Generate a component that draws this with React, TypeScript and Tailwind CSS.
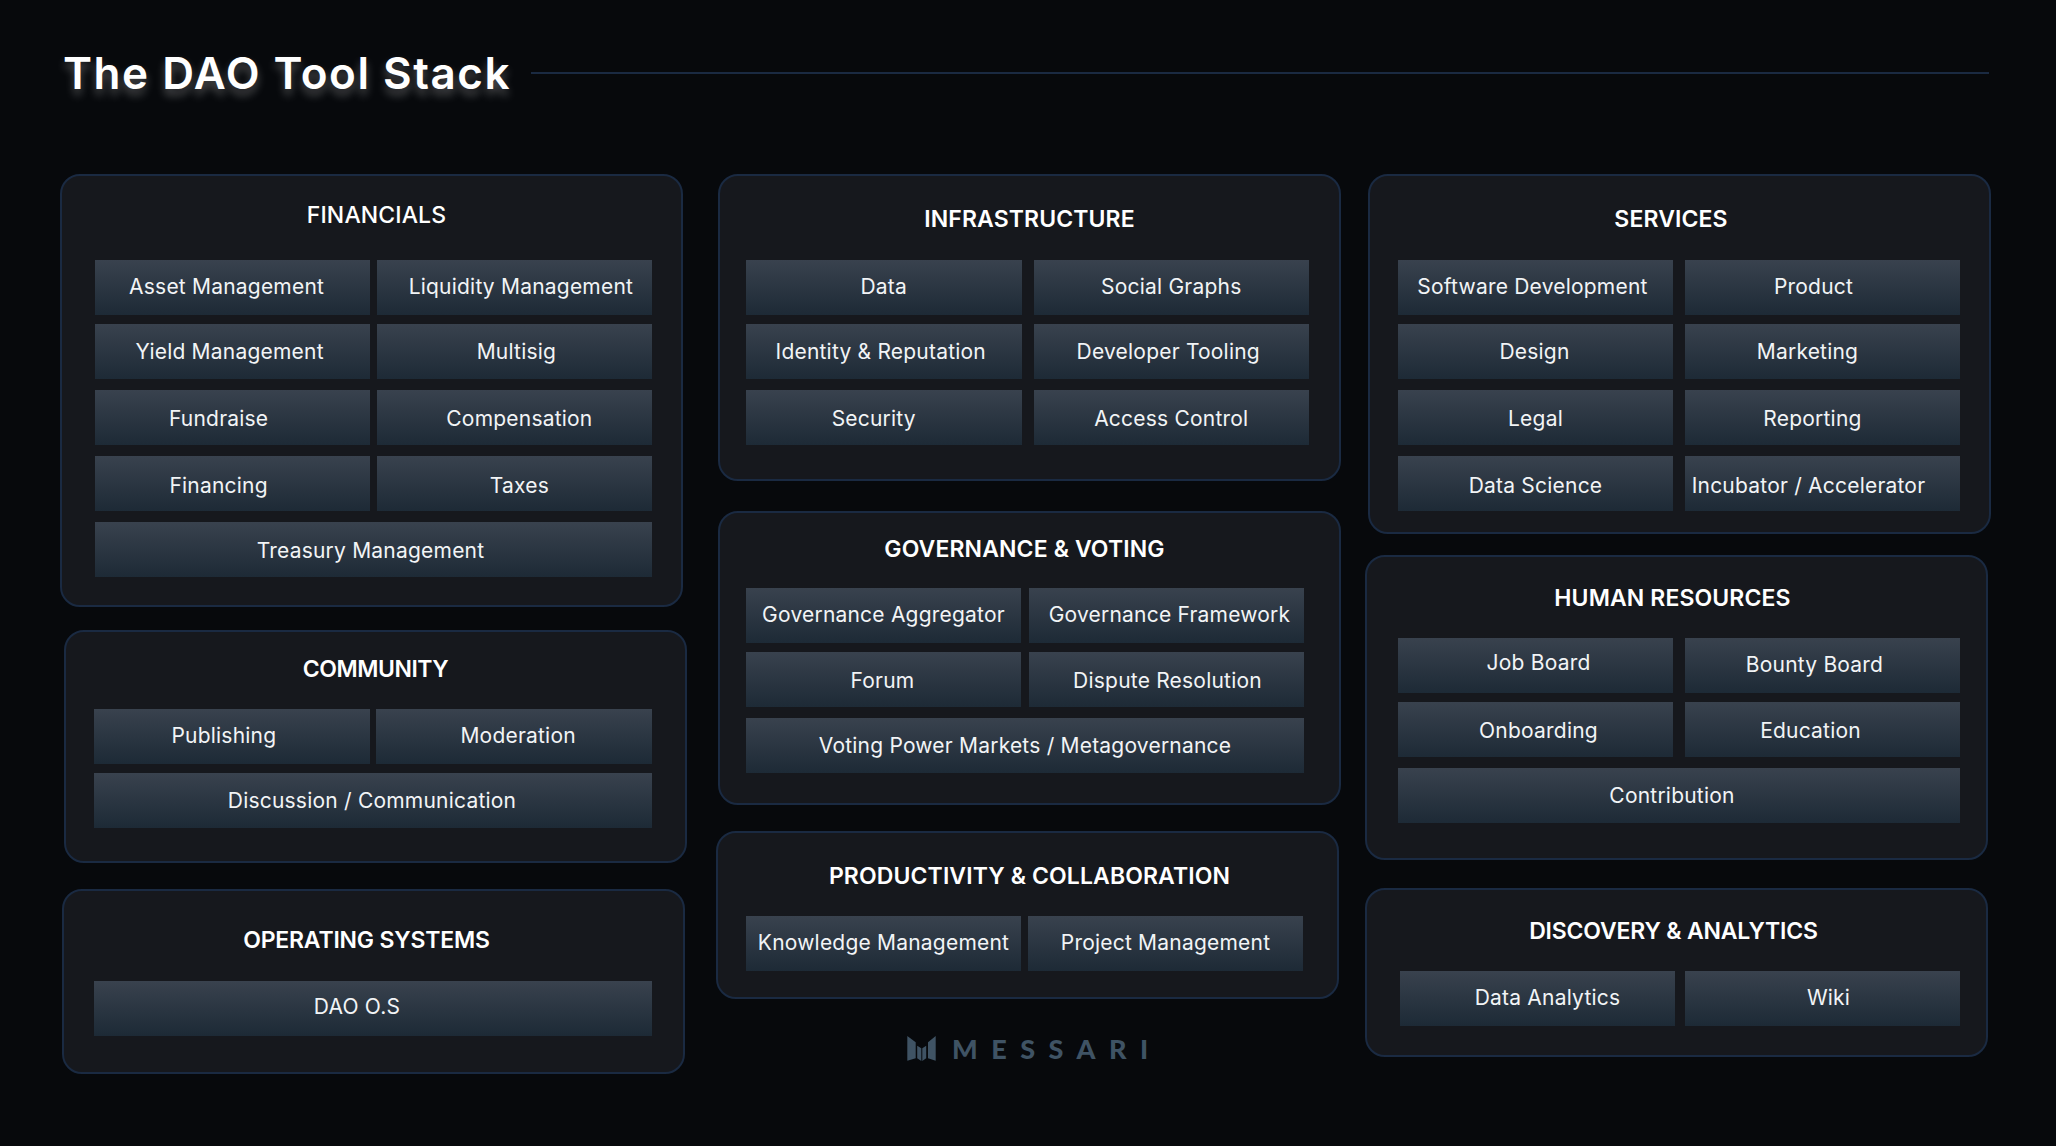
import type { ReactNode } from 'react';

type TileDef = { label: string; shift?: string };
type RowDef = { className?: string; tiles: TileDef[] };

type CardProps = {
  title: string;
  cardClass: string;
  headClass: string;
  titleClass?: string;
  bodyClass: string;
  rowClass: string;
  rows: RowDef[];
};

function Tile({ label, shift = '' }: TileDef) {
  return (
    <div className="flex-1 h-[55px] flex items-center justify-center bg-gradient-to-b from-[#39424e] to-[#1d2a36]">
      <span className={`text-[21px] tracking-[0.01em] text-[#f2f4f6] whitespace-nowrap ${shift}`}>{label}</span>
    </div>
  );
}

function Card({ title, cardClass, headClass, titleClass = 'font-semibold tracking-[0.005em]', bodyClass, rowClass, rows }: CardProps) {
  return (
    <section className={`w-[623px] rounded-[20px] border-2 border-[#1a2a42] bg-[#16181d] ${cardClass}`}>
      {/* Heading block, height sets where the tiles start */}
      <div className={`flex justify-center items-start ${headClass}`}>
        <h2 className={`text-[23px] leading-[28px] text-white ${titleClass}`}>{title}</h2>
      </div>
      <div className={bodyClass}>
        {rows.map((row, i) => (
          <div key={i} className={`flex ${rowClass} ${row.className ?? ''}`}>
            {row.tiles.map((t) => (
              <Tile key={t.label} {...t} />
            ))}
          </div>
        ))}
      </div>
    </section>
  );
}

function Column({ className, children }: { className: string; children: ReactNode }) {
  return <div className={`flex flex-col ${className}`}>{children}</div>;
}

function MessariMark() {
  return (
    <svg viewBox="0 0 29 27" className="w-[29px] h-[27px]" fill="#3f5364">
      <polygon points="0.3,1 8.7,7.3 8.7,23.3 0.3,25.7" />
      <polygon points="10.2,10.7 14.3,13.3 14.3,26 10.2,23.3" />
      <polygon points="15.3,13.3 19.2,10.7 19.2,23.3 15.3,26" />
      <polygon points="21,7.3 28.7,1 28.7,25.7 21,23.3" />
    </svg>
  );
}

export default function App() {
  return (
    <div className="w-[2056px] h-[1146px] overflow-hidden bg-[#07090c] font-['Inter','Liberation_Sans',sans-serif]">
      {/* Header */}
      <header className="flex items-center pl-[63px] pr-[67px] pt-[2px] h-[144px] mb-[30px]">
        <h1 className="text-[44px] leading-[52px] font-semibold text-white tracking-[0.035em] whitespace-nowrap [text-shadow:0_6px_10px_rgba(255,255,255,0.3)]">
          The DAO Tool Stack
        </h1>
        <div className="flex-1 h-[2px] bg-[#1a2a42] ml-[20px]" />
      </header>

      <main className="flex pl-[60px]">
        <Column className="w-[658px]">
          <Card
            title="FINANCIALS"
            cardClass="h-[433px]"
            headClass="h-[84px] pt-[25px]"
            titleClass="font-medium ml-[10px] tracking-[0.005em]"
            bodyClass="pl-[33px] w-[590px]"
            rowClass="gap-[6.5px]"
            rows={[
              { tiles: [{ label: 'Asset Management', shift: 'pr-[12px] pb-[2px]' }, { label: 'Liquidity Management', shift: 'pl-[13px] pb-[2px]' }] },
              { className: 'mt-[9px]', tiles: [{ label: 'Yield Management', shift: 'pr-[6px]' }, { label: 'Multisig', shift: 'pl-[4px]' }] },
              { className: 'mt-[11px]', tiles: [{ label: 'Fundraise', shift: 'pr-[28px] pt-[2px]' }, { label: 'Compensation', shift: 'pl-[10px] pt-[2px]' }] },
              { className: 'mt-[11px]', tiles: [{ label: 'Financing', shift: 'pr-[28px] pt-[4px]' }, { label: 'Taxes', shift: 'pl-[10px] pt-[4px]' }] },
              { className: 'mt-[11px]', tiles: [{ label: 'Treasury Management', shift: 'pr-[6px] pt-[2px]' }] },
            ]}
          />
          <Card
            title="COMMUNITY"
            cardClass="h-[233px] mt-[23px] ml-[4px]"
            headClass="h-[77px] pt-[23px]"
            titleClass="font-semibold tracking-[-0.02em]"
            bodyClass="pl-[28px] w-[586px]"
            rowClass="gap-[6.5px]"
            rows={[
              { tiles: [{ label: 'Publishing', shift: 'pr-[16px] pb-[2px]' }, { label: 'Moderation', shift: 'pl-[8px] pb-[2px]' }] },
              { className: 'mt-[9px]', tiles: [{ label: 'Discussion / Communication', shift: 'pr-[2px] pt-[1px]' }] },
            ]}
          />
          <Card
            title="OPERATING SYSTEMS"
            cardClass="h-[185px] mt-[26px] ml-[2px]"
            headClass="h-[90px] pt-[35px]"
            titleClass="font-semibold mr-[14px] tracking-[-0.008em]"
            bodyClass="pl-[30px] w-[588px]"
            rowClass=""
            rows={[{ tiles: [{ label: 'DAO O.S', shift: 'pr-[32px] pb-[4px]' }] }]}
          />
        </Column>

        <Column className="w-[650px]">
          <Card
            title="INFRASTRUCTURE"
            cardClass="h-[307px]"
            headClass="h-[84px] pt-[29px]"
            bodyClass="pl-[26px] w-[589px]"
            rowClass="gap-[12px]"
            rows={[
              { tiles: [{ label: 'Data', shift: 'pb-[2px]' }, { label: 'Social Graphs', shift: 'pb-[2px]' }] },
              { className: 'mt-[9px]', tiles: [{ label: 'Identity & Reputation', shift: 'pr-[6px] pt-[1px]' }, { label: 'Developer Tooling', shift: 'pr-[6px] pt-[1px]' }] },
              { className: 'mt-[11px]', tiles: [{ label: 'Security', shift: 'pr-[20px] pt-[2px]' }, { label: 'Access Control', shift: 'pt-[2px]' }] },
            ]}
          />
          <Card
            title="GOVERNANCE & VOTING"
            cardClass="h-[294px] mt-[30px]"
            headClass="h-[75px] pt-[22px]"
            titleClass="font-semibold mr-[10px] tracking-[0.005em]"
            bodyClass="pl-[26px] w-[584px]"
            rowClass="gap-[8px]"
            rows={[
              { tiles: [{ label: 'Governance Aggregator', shift: 'pb-[2px]' }, { label: 'Governance Framework', shift: 'pl-[6px] pb-[2px]' }] },
              { className: 'mt-[9px]', tiles: [{ label: 'Forum', shift: 'pr-[2px] pt-[2px]' }, { label: 'Dispute Resolution', shift: 'pl-[2px] pt-[2px]' }] },
              { className: 'mt-[11px]', tiles: [{ label: 'Voting Power Markets / Metagovernance' }] },
            ]}
          />
          <Card
            title="PRODUCTIVITY & COLLABORATION"
            cardClass="h-[168px] mt-[26px] ml-[-2px]"
            headClass="h-[83px] pt-[29px]"
            titleClass="font-semibold ml-[4px] tracking-[0.005em]"
            bodyClass="pl-[28px] w-[585px]"
            rowClass="gap-[7px]"
            rows={[{ tiles: [{ label: 'Knowledge Management', shift: 'pb-[2px]' }, { label: 'Project Management', shift: 'pb-[2px]' }] }]}
          />
          {/* Footer logo */}
          <div className="flex items-center ml-[189px] mt-[36px] gap-[16px]">
            <MessariMark />
            <span className="font-['Lato',sans-serif] font-black text-[27px] leading-[27px] tracking-[0.5em] text-[#3f5364] whitespace-nowrap">
              MESSARI
            </span>
          </div>
        </Column>

        <Column className="w-[630px]">
          <Card
            title="SERVICES"
            cardClass="h-[360px]"
            headClass="h-[84px] pt-[29px]"
            titleClass="font-semibold mr-[17px] tracking-[0.005em]"
            bodyClass="pl-[28px] w-[590px]"
            rowClass="gap-[12px]"
            rows={[
              { tiles: [{ label: 'Software Development', shift: 'pr-[6px] pb-[2px]' }, { label: 'Product', shift: 'pr-[18px] pb-[2px]' }] },
              { className: 'mt-[9px]', tiles: [{ label: 'Design', shift: 'pr-[2px] pt-[1px]' }, { label: 'Marketing', shift: 'pr-[30px] pt-[1px]' }] },
              { className: 'mt-[11px]', tiles: [{ label: 'Legal', shift: 'pt-[2px]' }, { label: 'Reporting', shift: 'pr-[20px] pt-[2px]' }] },
              { className: 'mt-[11px]', tiles: [{ label: 'Data Science', shift: 'pt-[4px]' }, { label: 'Incubator / Accelerator', shift: 'pr-[28px] pt-[4px]' }] },
            ]}
          />
          <Card
            title="HUMAN RESOURCES"
            cardClass="h-[305px] mt-[21px] ml-[-3px]"
            headClass="h-[81px] pt-[27px]"
            titleClass="font-semibold mr-[8px] tracking-[0.005em]"
            bodyClass="pl-[31px] w-[593px]"
            rowClass="gap-[12px]"
            rows={[
              { tiles: [{ label: 'Job Board', shift: 'pl-[6px] pb-[6px]' }, { label: 'Bounty Board', shift: 'pr-[16px] pb-[2px]' }] },
              { className: 'mt-[9px]', tiles: [{ label: 'Onboarding', shift: 'pl-[6px] pt-[2px]' }, { label: 'Education', shift: 'pr-[24px] pt-[2px]' }] },
              { className: 'mt-[11px]', tiles: [{ label: 'Contribution', shift: 'pr-[14px] pt-[1px]' }] },
            ]}
          />
          <Card
            title="DISCOVERY & ANALYTICS"
            cardClass="h-[169px] mt-[28px] ml-[-3px]"
            headClass="h-[81px] pt-[27px]"
            titleClass="font-semibold mr-[6px] tracking-[-0.008em]"
            bodyClass="pl-[33px] w-[593px]"
            rowClass="gap-[10px]"
            rows={[{ tiles: [{ label: 'Data Analytics', shift: 'pl-[20px] pb-[2px]' }, { label: 'Wiki', shift: 'pl-[12px] pb-[2px]' }] }]}
          />
        </Column>
      </main>
    </div>
  );
}
